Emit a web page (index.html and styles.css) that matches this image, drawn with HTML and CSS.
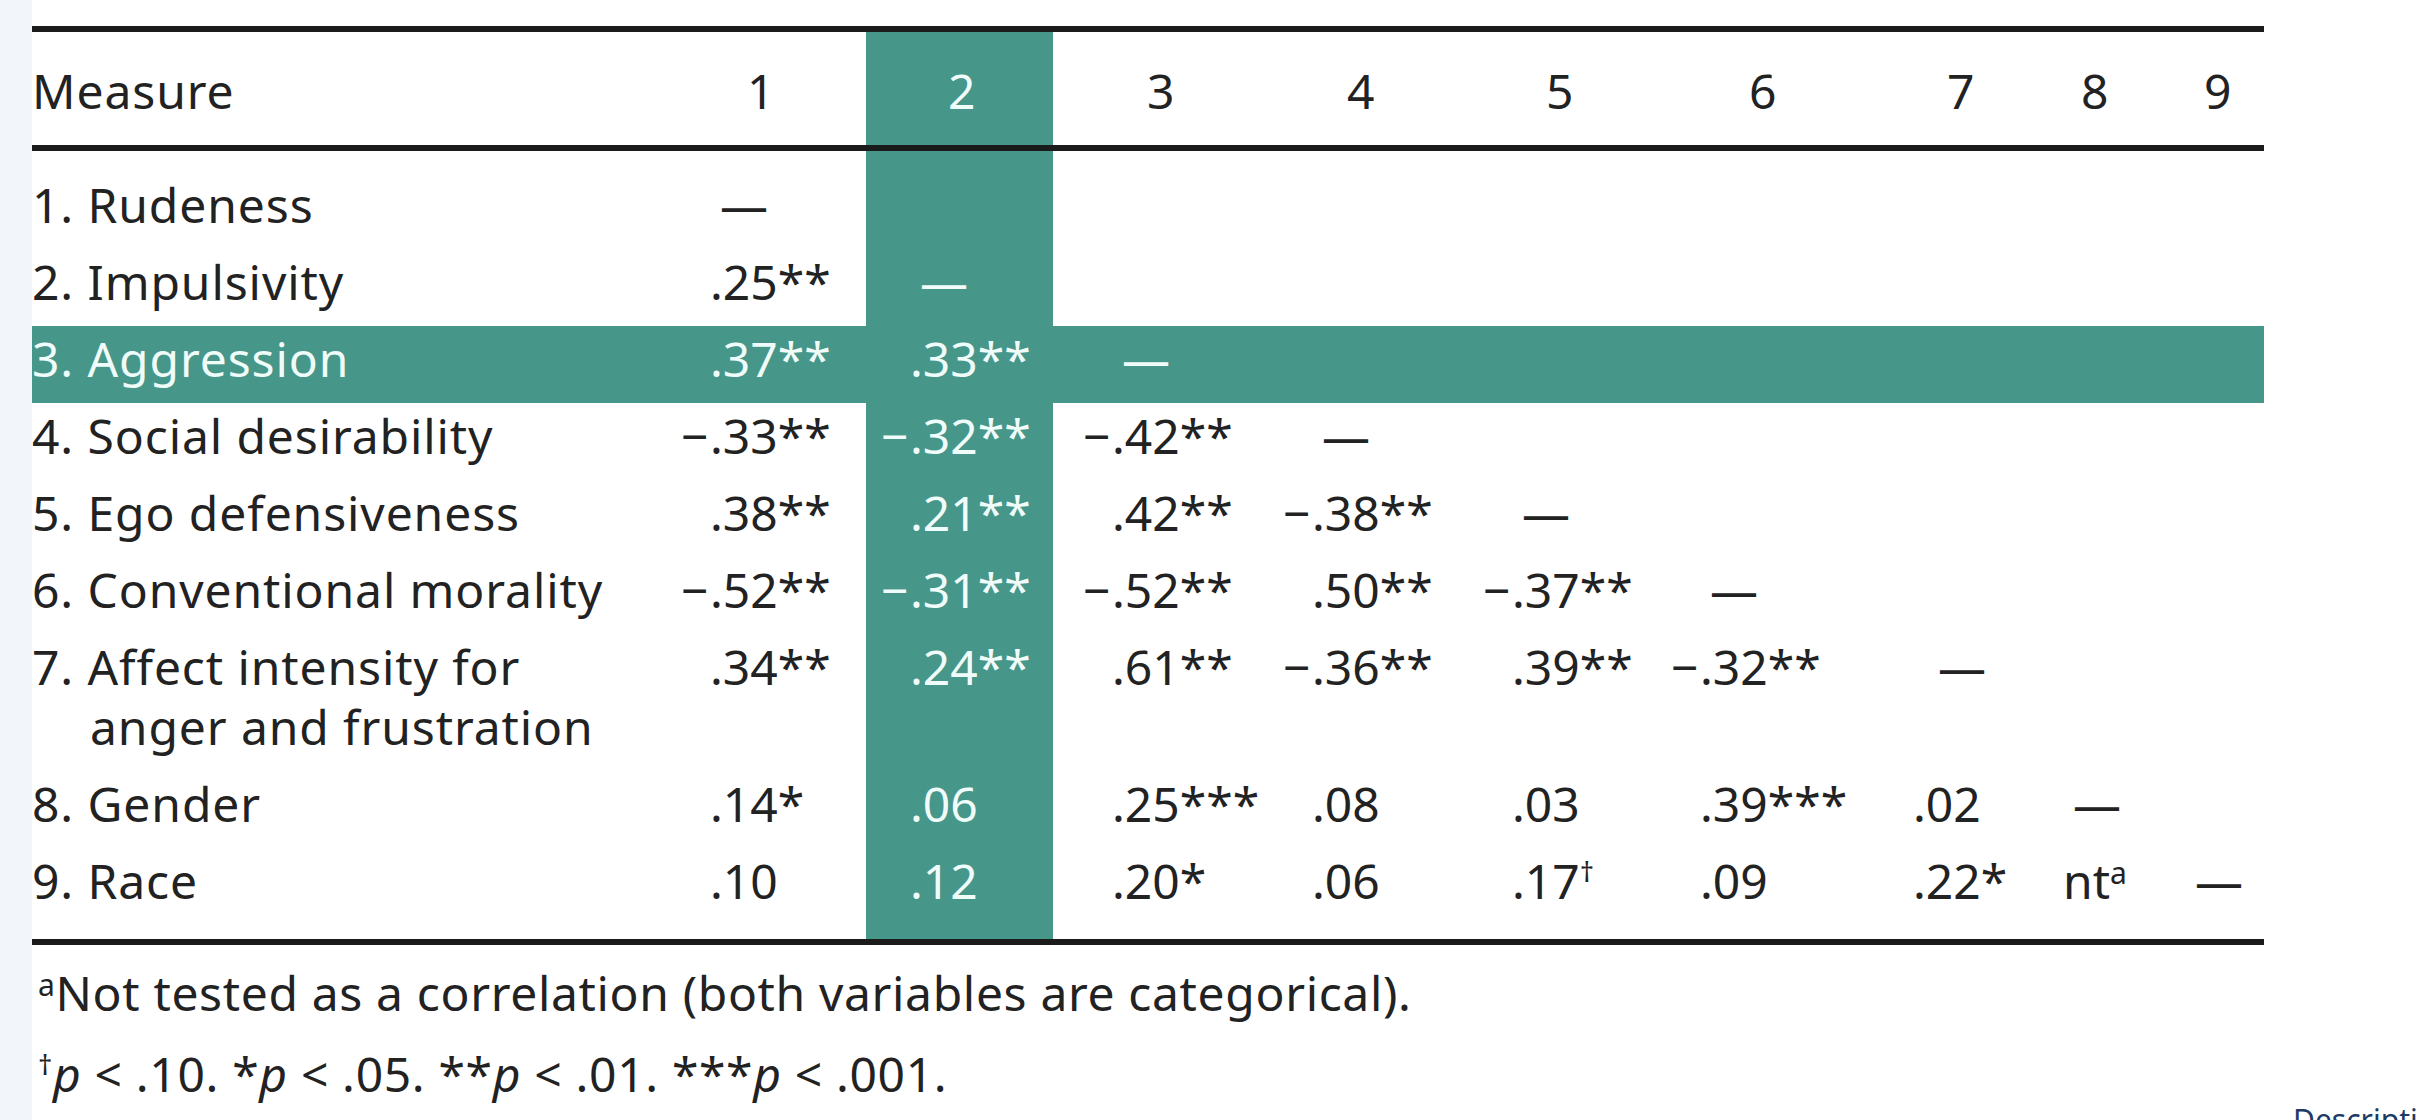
FILE: index.html
```html
<!DOCTYPE html>
<html lang="en">
<head>
    <meta charset="UTF-8">
    <meta name="viewport" content="width=device-width, initial-scale=1.0">
    <title>Correlations Among Study Measures</title>
    <link rel="stylesheet" href="styles.css">
</head>
<body>
<div class="page">
    <div class="gutter"></div>

    <div class="figure">
        <table class="corr">
            <colgroup>
                <col class="c-measure">
                <col class="c-1">
                <col class="c-2">
                <col class="c-3">
                <col class="c-4">
                <col class="c-5">
                <col class="c-6">
                <col class="c-7">
                <col class="c-8">
                <col class="c-9">
            </colgroup>
            <thead>
                <tr>
                    <th class="label">Measure</th>
                    <th>1</th>
                    <th class="hl">2</th>
                    <th>3</th>
                    <th>4</th>
                    <th>5</th>
                    <th>6</th>
                    <th>7</th>
                    <th>8</th>
                    <th>9</th>
                </tr>
            </thead>
            <tbody>
                <tr class="first">
                    <td class="label">1. Rudeness</td>
                    <td><span class="dash">—</span></td>
                    <td class="hl"></td>
                    <td></td><td></td><td></td><td></td><td></td><td></td><td></td>
                </tr>
                <tr>
                    <td class="label">2. Impulsivity</td>
                    <td>.25**</td>
                    <td class="hl"><span class="dash">—</span></td>
                    <td></td><td></td><td></td><td></td><td></td><td></td><td></td>
                </tr>
                <tr class="hl">
                    <td class="label">3. Aggression</td>
                    <td>.37**</td>
                    <td>.33**</td>
                    <td><span class="dash">—</span></td>
                    <td></td><td></td><td></td><td></td><td></td><td></td>
                </tr>
                <tr>
                    <td class="label">4. Social desirability</td>
                    <td><span class="neg">−</span>.33**</td>
                    <td class="hl"><span class="neg">−</span>.32**</td>
                    <td><span class="neg">−</span>.42**</td>
                    <td><span class="dash">—</span></td>
                    <td></td><td></td><td></td><td></td><td></td>
                </tr>
                <tr>
                    <td class="label">5. Ego defensiveness</td>
                    <td>.38**</td>
                    <td class="hl">.21**</td>
                    <td>.42**</td>
                    <td><span class="neg">−</span>.38**</td>
                    <td><span class="dash">—</span></td>
                    <td></td><td></td><td></td><td></td>
                </tr>
                <tr>
                    <td class="label">6. Conventional morality</td>
                    <td><span class="neg">−</span>.52**</td>
                    <td class="hl"><span class="neg">−</span>.31**</td>
                    <td><span class="neg">−</span>.52**</td>
                    <td>.50**</td>
                    <td><span class="neg">−</span>.37**</td>
                    <td><span class="dash">—</span></td>
                    <td></td><td></td><td></td>
                </tr>
                <tr>
                    <td class="label">7. Affect intensity for<br>anger and frustration</td>
                    <td>.34**</td>
                    <td class="hl">.24**</td>
                    <td>.61**</td>
                    <td><span class="neg">−</span>.36**</td>
                    <td>.39**</td>
                    <td><span class="neg">−</span>.32**</td>
                    <td><span class="dash far">—</span></td>
                    <td></td><td></td>
                </tr>
                <tr>
                    <td class="label">8. Gender</td>
                    <td>.14*</td>
                    <td class="hl">.06</td>
                    <td>.25***</td>
                    <td>.08</td>
                    <td>.03</td>
                    <td>.39***</td>
                    <td>.02</td>
                    <td><span class="dash">—</span></td>
                    <td></td>
                </tr>
                <tr class="last">
                    <td class="label">9. Race</td>
                    <td>.10</td>
                    <td class="hl">.12</td>
                    <td>.20*</td>
                    <td>.06</td>
                    <td>.17<sup class="dag">†</sup></td>
                    <td>.09</td>
                    <td>.22*</td>
                    <td>nt<sup>a</sup></td>
                    <td><span class="dash">—</span></td>
                </tr>
            </tbody>
        </table>

        <p class="note"><sup>a</sup>Not tested as a correlation (both variables are categorical).</p>
        <p class="note"><sup class="dag">†</sup><i>p</i> &lt; .10. *<i>p</i> &lt; .05. **<i>p</i> &lt; .01. ***<i>p</i> &lt; .001.</p>
    </div>

    <div class="aside">
        <a class="more" href="#">Description</a>
    </div>
</div>
</body>
</html>
```

FILE: styles.css
```css
body {
    margin:             0;
    background-color:   #fff;
    color:              #222;
    font-family:        "Noto Sans", "Open Sans", sans-serif;
}

.page {
    display:            flex;
    height:             1120px;
    overflow:           hidden;
}

.gutter {
    flex:               none;
    width:              32px;
    background-color:   #f2f5f9;
}

.figure {
    flex:               none;
    width:              2232px;
    padding-top:        26px;
}

/* correlation table */

.corr {
    width:              2232px;
    table-layout:       fixed;
    border-collapse:    separate;
    border-spacing:     0;
    font-size:          48px;
    line-height:        60px;
}

col.c-measure           { width: 634px; }
col.c-1                 { width: 200px; }
col.c-2                 { width: 187px; }
col.c-3                 { width: 215px; }
col.c-4                 { width: 200px; }
col.c-5                 { width: 188px; }
col.c-6                 { width: 213px; }
col.c-7                 { width: 150px; }
col.c-8                 { width: 122px; }
col.c-9                 { width: 123px; }

.corr th,
.corr td {
    padding:            3px 0 14px 44px;
    text-align:         left;
    vertical-align:     top;
    font-weight:        400;
    white-space:        nowrap;
}

.corr th {
    padding-top:        29px;
    padding-bottom:     24px;
    padding-left:       81px;
    border-top:         6px solid #1b1b1b;
    border-bottom:      6px solid #1b1b1b;
}

.corr th:nth-child(3)   { padding-left: 82px; }
.corr th:nth-child(4)   { padding-left: 94px; }
.corr th:nth-child(5)   { padding-left: 79px; }
.corr th:nth-child(6)   { padding-left: 78px; }
.corr th:nth-child(7)   { padding-left: 93px; }
.corr th:nth-child(8)   { padding-left: 78px; }
.corr th:nth-child(9)   { padding-left: 62px; }
.corr th:nth-child(10)  { padding-left: 63px; }

.corr td:nth-child(4)   { padding-left: 59px; }

.corr .label {
    padding-left:       58px;
    text-indent:        -58px;
    white-space:        normal;
    letter-spacing:     0.9px;
}

.corr tr.first td       { padding-top: 24px; }
.corr tr.last td {
    padding-bottom:     28px;
    border-bottom:      6px solid #1b1b1b;
}

/* highlighted column 2 and row 3 */
.hl,
tr.hl td {
    background-color:   #46968a;
    color:              #effcf9;
}

.neg {
    display:            inline-block;
    width:              29px;
    margin-left:        -29px;
    text-indent:        0;
}

.dash                   { margin-left: 10px; }
.dash.far               { margin-left: 25px; }

sup {
    font-size:          30px;
    line-height:        0;
    vertical-align:     15px;
}

sup.dag                 { font-size: 28px; vertical-align: 17px; }

/* footnotes */

.note {
    margin:             0 0 21px;
    padding-left:       6px;
    font-size:          48px;
    line-height:        60px;
    letter-spacing:     0.65px;
}

.corr + .note           { margin-top: 18px; }

.note i                 { font-style: italic; }

.aside {
    flex:               1;
    padding:            1099px 0 0 29px;
}

.more {
    color:              #1d3b66;
    font-size:          30px;
    text-decoration:    none;
    white-space:        nowrap;
}
```
